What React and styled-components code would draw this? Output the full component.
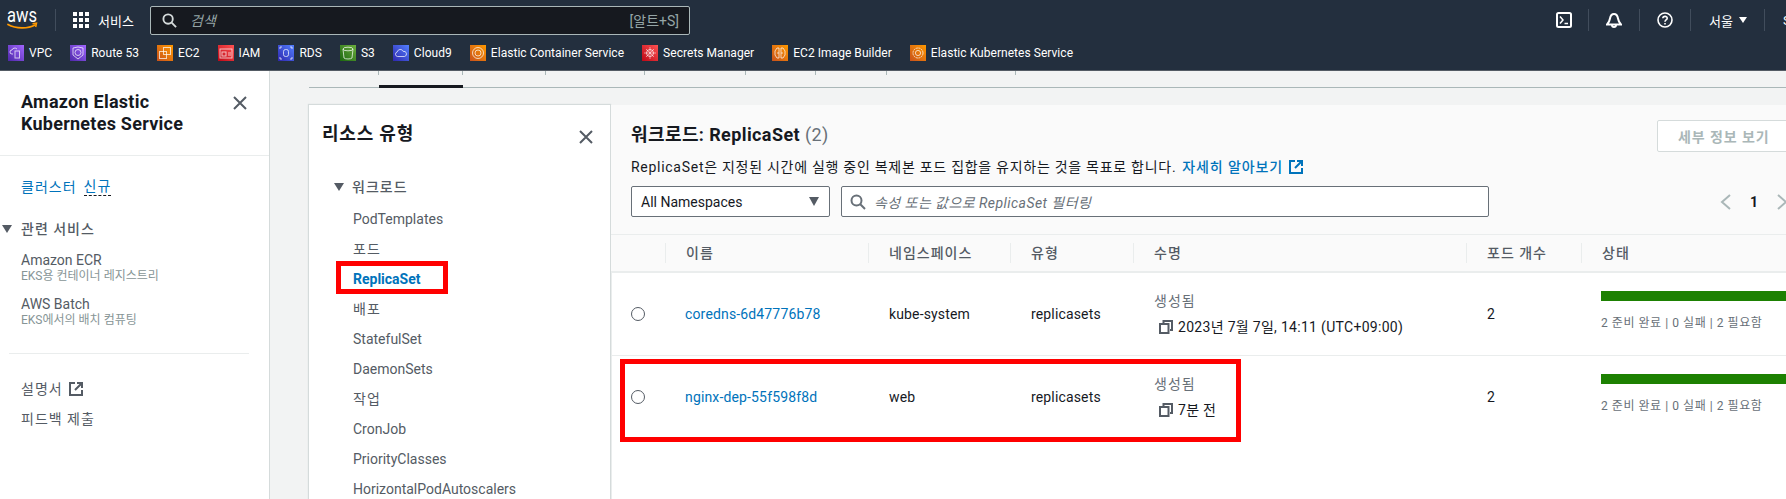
import React from 'react'
import styled, { createGlobalStyle } from 'styled-components'

const GlobalStyle = createGlobalStyle`
  html, body {
    margin: 0;
    padding: 0;
    background: #fff;
  }
  * {
    box-sizing: border-box;
  }
  body {
    font-family: Roboto, "Noto Sans CJK KR", sans-serif;
    font-size: 14px;
    color: #16191f;
  }
`

const Page = styled.div`
  width: 1786px;
  height: 499px;
  overflow: hidden;
  display: flex;
  flex-direction: column;
`

// the reference's hangul sets wider than Noto's, so labels get a little tracking
const Hangul = styled.span`
  letter-spacing: 1px;
`

/* top nav */
const Nav = styled.header`
  height: 71px;
  flex-shrink: 0;
  background: #232f3e;
  border-bottom: 1px solid #545b64;
  color: #fff;
`

const TopRow = styled.div`
  height: 40px;
  display: flex;
  align-items: center;
  white-space: nowrap;
`

const LogoWrap = styled.div`
  width: 55px;
  padding-left: 7px;
  display: flex;
`

const NavDivider = styled.span`
  width: 1px;
  height: 22px;
  background: #414d5c;
  flex-shrink: 0;
`

const ServicesButton = styled.div`
  display: flex;
  align-items: center;
  gap: 9px;
  width: 94px;
  padding-left: 17px;
  font-size: 13px;
`

const SearchBox = styled.div`
  width: 540px;
  height: 29px;
  display: flex;
  align-items: center;
  padding: 0 10px 0 11px;
  background: #16191f;
  border: 1px solid #aab7b8;
  border-radius: 2px;
`

const SearchHint = styled.span`
  margin-left: 13px;
  font-size: 14px;
  font-style: italic;
  color: #95a5a6;
  flex: 1;
`

const Shortcut = styled.span`
  font-size: 14px;
  color: #95a5a6;
`

const NavTools = styled.div`
  margin-left: auto;
  display: flex;
  align-items: center;
  flex-shrink: 0;
`

const ToolIcon = styled.span`
  width: ${(p) => p.$first ? 32 : 50}px;
  display: flex;
  justify-content: ${(p) => p.$first ? 'flex-start' : 'center'};
`

const Region = styled.div`
  width: 73px;
  padding-left: 18px;
  display: flex;
  align-items: center;
  gap: 6px;
  font-size: 13px;
`

const RegionCaret = styled.span`
  width: 0;
  height: 0;
  border-left: 4px solid transparent;
  border-right: 4px solid transparent;
  border-top: 6px solid #fff;
`

const Account = styled.div`
  width: 21px;
  padding-left: 18px;
  font-size: 13px;
  overflow: hidden;
`

const FavRow = styled.div`
  height: 30px;
  display: flex;
  align-items: flex-start;
  gap: 18px;
  padding: 5px 0 0 8px;
  white-space: nowrap;
`

const Fav = styled.div`
  display: flex;
  align-items: center;
  gap: 5px;
  font-size: 12px;
  line-height: 16px;
  letter-spacing: 0.04px;
`

const FavIcon = styled.span`
  width: 16px;
  height: 16px;
  display: flex;
  background: linear-gradient(45deg, ${(p) => p.$from}, ${(p) => p.$to});
`

/* left service sidebar */
const Body = styled.div`
  flex: 1;
  display: flex;
  min-height: 0;
`

const Sidebar = styled.aside`
  width: 270px;
  flex-shrink: 0;
  background: #fff;
  border-right: 1px solid #d5dbdb;
`

const SideHeader = styled.div`
  display: flex;
  justify-content: space-between;
  padding: 20px 22px 20px 21px;
  border-bottom: 1px solid #eaeded;
`

const SideTitle = styled.h2`
  margin: 0;
  font-size: 18px;
  line-height: 22px;
  font-weight: 700;
  letter-spacing: 0.25px;
`

const CloseWrap = styled.span`
  display: flex;
  padding-top: ${(p) => p.$top}px;
`

const SideNav = styled.nav`
  padding: 21px 0 0 21px;
`

const SideLink = styled.div`
  line-height: 20px;
  color: ${(p) => p.$blue ? '#0073bb' : '#545b64'};
  margin-top: ${(p) => p.$mt || 0}px;
  display: flex;
  align-items: center;
`

const NewBadge = styled.span`
  margin-left: 7px;
  border-bottom: 1px dashed #16191f;
  line-height: 17px;
  letter-spacing: 1px;
`

const SideGroup = styled.div`
  position: relative;
  margin-top: 22px;
  line-height: 20px;
  font-weight: 500;
  color: #545b64;
`

const GroupCaret = styled.span`
  position: absolute;
  left: -19px;
  top: 6px;
  width: 0;
  height: 0;
  border-left: 5px solid transparent;
  border-right: 5px solid transparent;
  border-top: 8px solid #545b64;
`

const SideSub = styled.div`
  font-size: 12px;
  line-height: 16px;
  color: #879596;
  margin-top: -2px;
`

const SideSep = styled.hr`
  border: 0;
  border-top: 1px solid #eaeded;
  margin: 25px 20px 25px -12px;
`

const DocLabel = styled(Hangul)`
  margin-right: 6px;
`

/* content area */
const Content = styled.main`
  flex: 1;
  min-width: 0;
  background: #f2f3f3;
  padding-left: 39px;
  display: flex;
  flex-direction: column;
`

const TabStrip = styled.div`
  height: 17px;
  flex-shrink: 0;
  display: flex;
  border-bottom: 1px solid #aab7b8;
`

const Tab = styled.div`
  width: ${(p) => p.$w}px;
  height: 17px;
  display: flex;
  justify-content: flex-end;
  border-bottom: ${(p) => p.$active ? '3px solid #16191f' : '0'};
`

const Tick = styled.span`
  width: 1px;
  height: 4px;
  background: #aab7b8;
`

const Panels = styled.div`
  flex: 1;
  min-height: 0;
  margin-top: 17px;
  display: flex;
  gap: 1px;
`

const ResourcePanel = styled.section`
  position: relative;
  width: 301px;
  flex-shrink: 0;
  background: #fff;
  box-shadow: 0 0 1px 1px #d5dbdb;
  padding: 18px 17px 0 13px;
`

const PanelHead = styled.div`
  display: flex;
  justify-content: space-between;
`

const PanelTitle = styled.h2`
  margin: 0;
  font-size: 18px;
  line-height: 22px;
  font-weight: 700;
  letter-spacing: 0.8px;
`

const Tree = styled.div`
  margin-top: 32px;
  padding-left: 12px;
`

const TreeHead = styled.div`
  display: flex;
  align-items: center;
  gap: 8px;
  line-height: 20px;
  color: #545b64;
  font-weight: 500;
`

const TreeCaret = styled.span`
  width: 0;
  height: 0;
  border-left: 5px solid transparent;
  border-right: 5px solid transparent;
  border-top: 8px solid #545b64;
`

const TreeList = styled.div`
  margin-top: 7px;
  padding-left: 19px;
`

const TreeItem = styled.div`
  line-height: 30px;
  color: ${(p) => p.$active ? '#0073bb' : '#545b64'};
  font-weight: ${(p) => p.$active ? 700 : 400};
  letter-spacing: ${(p) => p.$ko ? 1 : 0}px;
`

const RedBox = styled.div`
  position: absolute;
  left: ${(p) => p.$x}px;
  top: ${(p) => p.$y}px;
  width: ${(p) => p.$w}px;
  height: ${(p) => p.$h}px;
  border: 5px solid #ff0000;
  pointer-events: none;
`

const WorkloadPanel = styled.section`
  position: relative;
  flex: 1;
  min-width: 0;
  background: #fff;
  overflow: hidden;
  box-shadow: inset 1px 0 0 #eaeded;
`

const WorkloadHead = styled.div`
  background: #fafafa;
  padding: 15px 0 17px 20px;
`

const TitleRow = styled.div`
  display: flex;
  justify-content: space-between;
  align-items: flex-start;
`

const WorkloadTitle = styled.h1`
  margin: 4px 0 0;
  font-size: 18px;
  line-height: 22px;
  font-weight: 700;
  letter-spacing: 0.4px;
`

const TitleCount = styled.span`
  font-weight: 400;
  color: #687078;
`

const DetailButton = styled.button`
  width: 150px;
  height: 32px;
  flex-shrink: 0;
  margin-right: -21px;
  padding: 0 0 0 20px;
  text-align: left;
  font: 700 14px Roboto, "Noto Sans CJK KR", sans-serif;
  letter-spacing: 0.9px;
  color: #aab7b8;
  background: #fff;
  border: 1px solid #d5dbdb;
  border-radius: 2px;
`

const Description = styled.div`
  margin: 5px 0 0;
  line-height: 20px;
  display: flex;
  align-items: center;
`

const DescriptionText = styled.span`
  letter-spacing: 0.72px;
`

const LearnLink = styled.span`
  margin-left: 6px;
  color: #0073bb;
  font-weight: 500;
  letter-spacing: 0.9px;
  display: flex;
  align-items: center;
  gap: 6px;
`

const FilterRow = styled.div`
  margin-top: 9px;
  height: 31px;
  display: flex;
  align-items: stretch;
`

const Select = styled.div`
  width: 199px;
  display: flex;
  align-items: center;
  justify-content: space-between;
  padding: 0 10px 0 9px;
  background: #fff;
  border: 1px solid #687078;
  border-radius: 2px;
`

const SelectCaret = styled.span`
  width: 0;
  height: 0;
  border-left: 5.5px solid transparent;
  border-right: 5.5px solid transparent;
  border-top: 9px solid #545b64;
`

const FilterInput = styled.div`
  width: 648px;
  margin-left: 11px;
  display: flex;
  align-items: center;
  gap: 8px;
  padding-left: 8px;
  background: #fff;
  border: 1px solid #687078;
  border-radius: 2px;
  font-style: italic;
  color: #687078;
  letter-spacing: 0.45px;
`

const Pager = styled.div`
  margin-left: auto;
  margin-right: -2px;
  display: flex;
  align-items: center;
  gap: 19px;
  font-weight: 700;
`

const TableGrid = styled.div`
  display: grid;
  grid-template-columns: 54px 203px 142px 123px 333px 115px 1fr;
  border-bottom: ${(p) => p.$line ? `${p.$line}px solid #eaeded` : '0'};
`

const HeadGrid = styled(TableGrid)`
  height: 39px;
  background: #fafafa;
  border-top: 1px solid #eaeded;
  align-items: center;
`

const HeadCell = styled.div`
  height: 20px;
  line-height: 21px;
  padding-left: 20px;
  font-weight: 500;
  letter-spacing: 1px;
  color: #545b64;
  border-left: ${(p) => p.$bare ? '0' : '1px solid #eaeded'};
`

const Cell = styled.div`
  height: 82px;
  padding-left: 21px;
  display: flex;
  flex-direction: column;
  justify-content: center;
  line-height: 20px;
  letter-spacing: 0.15px;
  color: #16191f;
  white-space: nowrap;
`

const LinkCell = styled(Cell)`
  padding-left: 20px;
  color: #0073bb;
`

const RadioCell = styled(Cell)`
  padding-left: 20px;
`

const Radio = styled.span`
  width: 14px;
  height: 14px;
  border: 1px solid #545b64;
  border-radius: 50%;
  background: #fff;
`

const AgeLabel = styled.div`
  color: #687078;
  margin-bottom: 6px;
  letter-spacing: 1px;
`

const AgeValue = styled.div`
  display: flex;
  align-items: center;
  gap: 5px;
  padding-left: 5px;
  letter-spacing: 0.3px;
`

const StatusBar = styled.div`
  height: 10px;
  background: #1d8102;
  margin: 0 0 14px;
`

const StatusCell = styled(Cell)`
  padding-left: 20px;
  justify-content: flex-start;
  padding-top: 18px;
`

const StatusText = styled.div`
  font-size: 12px;
  line-height: 16px;
  color: #687078;
  letter-spacing: 0.55px;
`

/* icons */
const Glyph = ({ children }) => (
  <svg width="16" height="16" viewBox="0 0 16 16" fill="none" stroke="#fff" strokeOpacity="0.7" strokeWidth="1">
    {children}
  </svg>
)

const AwsLogo = () => (
  <svg width="32" height="24" viewBox="0 0 32 24" style={{ overflow: 'visible' }}>
    <text x="0" y="14" fontFamily="Roboto, sans-serif" fontSize="21" fill="#fff" textLength="30" lengthAdjust="spacingAndGlyphs">aws</text>
    <path d="M1 16.500c8 4.500 20 4.500 27 .5" fill="none" stroke="#ff9900" strokeWidth="1.8" strokeLinecap="round" />
    <path d="M25.500 15.800l4-.6-.8 3.800" fill="none" stroke="#ff9900" strokeWidth="1.5" />
  </svg>
)

const GridIcon = () => (
  <svg width="16" height="16" viewBox="0 0 16 16" fill="#fff">
    {[0, 6, 12].map((x) => [0, 6, 12].map((y) => (
      <rect key={`${x}-${y}`} x={x} y={y} width="4" height="4" />
    )))}
  </svg>
)

const SearchIcon = ({ color, size = 16, sw = 2 }) => (
  <svg width={size} height={size} viewBox="0 0 16 16" fill="none" stroke={color} strokeWidth={sw} style={{ flexShrink: 0 }}>
    <circle cx="6.500" cy="6.500" r="5" />
    <path d="M10.300 10.300L15 15" />
  </svg>
)

const CloseIcon = () => (
  <svg width="14" height="14" viewBox="0 0 14 14" stroke="#545b64" strokeWidth="2" fill="none">
    <path d="M1 1l12 12M13 1L1 13" />
  </svg>
)

const ExternalIcon = ({ color }) => (
  <svg width="14" height="14" viewBox="0 0 14 14" fill="none" stroke={color} strokeWidth="2">
    <path d="M6 1H1v12h12V8" />
    <path d="M8 1h5v5M13 1L6 8" />
  </svg>
)

const CopyIcon = () => (
  <svg width="14" height="14" viewBox="0 0 14 14" fill="none" stroke="#545b64" strokeWidth="2" style={{ flexShrink: 0 }}>
    <rect x="1" y="4" width="8.500" height="9" />
    <path d="M4.500 3V1H13v9h-2" />
  </svg>
)

const favorites = [
  { name: 'VPC', from: '#4d27a8', to: '#a166ff', glyph: <><path d="M5 9H4a2 2 0 0 1 0-4c.4-2 3.600-2.600 5-1" /><rect x="7" y="6" width="4.500" height="7" /></> },
  { name: 'Route 53', from: '#4d27a8', to: '#a166ff', glyph: <><path d="M3 3l5-1 5 1v7l-5 4-5-4z" /><circle cx="8" cy="7.500" r="3" /></> },
  { name: 'EC2', from: '#c8511b', to: '#ff9900', glyph: <><rect x="2.500" y="6.500" width="7" height="7" /><rect x="6.500" y="2.500" width="7" height="7" /></> },
  { name: 'IAM', from: '#bd0816', to: '#ff5252', glyph: <><rect x="2" y="4" width="12" height="9" /><rect x="4" y="7" width="4" height="4" /><path d="M10 8h3M10 10h3" /></> },
  { name: 'RDS', from: '#2e27ad', to: '#527fff', glyph: <><rect x="5.500" y="4.500" width="5" height="7" rx="2" /><path d="M2 4V2h2M12 2h2v2M14 12v2h-2M4 14H2v-2" /></> },
  { name: 'S3', from: '#1b660f', to: '#6cae3e', glyph: <><ellipse cx="8" cy="4" rx="5" ry="1.800" /><path d="M3 4l1 9c1 1.300 7 1.300 8 0l1-9" /></> },
  { name: 'Cloud9', from: '#2e27ad', to: '#527fff', glyph: <path d="M4.500 11.500a2.300 2.300 0 0 1-.3-4.500C4.800 4 9 3.600 10.200 6.400a2.600 2.600 0 0 1 1.300 5.100z" /> },
  { name: 'Elastic Container Service', from: '#c8511b', to: '#ff9900', glyph: <><circle cx="8" cy="8" r="5.500" /><circle cx="8" cy="8" r="3" /></> },
  { name: 'Secrets Manager', from: '#bd0816', to: '#ff5252', glyph: <><circle cx="8" cy="8" r="3.500" /><path d="M8 2v12M2 8h12M4 4l8 8M12 4l-8 8" strokeOpacity="0.5" /></> },
  { name: 'EC2 Image Builder', from: '#c8511b', to: '#ff9900', glyph: <><path d="M7 3H5L3 6v4l2 3h2zM9 3h2l2 3v4l-2 3H9z" /><path d="M5 8h2M9 8h2" /></> },
  { name: 'Elastic Kubernetes Service', from: '#c8511b', to: '#ff9900', glyph: <><circle cx="8" cy="8" r="5" strokeDasharray="2 0.6" /><circle cx="8" cy="8" r="2.600" /></> },
]

const tabs = [
  { w: 70 },
  { w: 84, active: true },
  { w: 83 },
  { w: 99 },
  { w: 101 },
  { w: 70 },
  { w: 71 },
  { w: 129 },
]

const treeItems = [
  'PodTemplates', '포드', 'ReplicaSet', '배포', 'StatefulSet', 'DaemonSets',
  '작업', 'CronJob', 'PriorityClasses', 'HorizontalPodAutoscalers',
]

const headers = ['이름', '네임스페이스', '유형', '수명', '포드 개수', '상태']

const rows = [
  { name: 'coredns-6d47776b78', ns: 'kube-system', age: '2023년 7월 7일, 14:11 (UTC+09:00)' },
  { name: 'nginx-dep-55f598f8d', ns: 'web', age: '7분 전' },
]

const App = () => {
  return (
    <Page>
      <GlobalStyle />
      <Nav>
        <TopRow>
          <LogoWrap><AwsLogo /></LogoWrap>
          <NavDivider />
          <ServicesButton><GridIcon />서비스</ServicesButton>
          <SearchBox>
            <SearchIcon color="#d5dbdb" size={15} />
            <SearchHint>검색</SearchHint>
            <Shortcut>[알트+S]</Shortcut>
          </SearchBox>
          <NavTools>
            <ToolIcon $first>
              <svg width="16" height="16" viewBox="0 0 16 16" fill="none" stroke="#fff" strokeWidth="2">
                <rect x="1" y="1" width="14" height="14" rx="1.500" />
                <path d="M4 4.500L7 8l-3 3.500M8.500 11.500h3.500" strokeWidth="1.500" />
              </svg>
            </ToolIcon>
            <NavDivider />
            <ToolIcon>
              <svg width="16" height="16" viewBox="0 0 16 16" fill="none" stroke="#fff" strokeWidth="2">
                <path d="M1 12.500h14c-2-2-2.500-3-3-6C11.500 3.500 10 2 8 2S4.500 3.500 4 6.500c-.5 3-1 4-3 6z" />
                <path d="M6 13a2 2 0 0 0 4 0" />
              </svg>
            </ToolIcon>
            <NavDivider />
            <ToolIcon>
              <svg width="16" height="16" viewBox="0 0 16 16" fill="none" stroke="#fff" strokeWidth="1.600">
                <circle cx="8" cy="8" r="7" />
                <path d="M5.800 6.300C6 3.800 10.200 3.800 10.200 6.200c0 1.800-2.200 1.700-2.200 3.500" />
                <path d="M8 11v1.500" />
              </svg>
            </ToolIcon>
            <NavDivider />
            <Region>서울<RegionCaret /></Region>
            <NavDivider />
            <Account>S</Account>
          </NavTools>
        </TopRow>
        <FavRow>
          {favorites.map((f) => (
            <Fav key={f.name}>
              <FavIcon $from={f.from} $to={f.to}><Glyph>{f.glyph}</Glyph></FavIcon>
              {f.name}
            </Fav>
          ))}
        </FavRow>
      </Nav>
      <Body>
        <Sidebar>
          <SideHeader>
            <SideTitle>Amazon Elastic<br />Kubernetes Service</SideTitle>
            <CloseWrap $top={5}><CloseIcon /></CloseWrap>
          </SideHeader>
          <SideNav>
            <SideLink $blue><Hangul>클러스터</Hangul><NewBadge>신규</NewBadge></SideLink>
            <SideGroup><GroupCaret /><Hangul>관련 서비스</Hangul></SideGroup>
            <SideLink $mt={11}>Amazon ECR</SideLink>
            <SideSub>EKS용 컨테이너 레지스트리</SideSub>
            <SideLink $mt={10}>AWS Batch</SideLink>
            <SideSub>EKS에서의 배치 컴퓨팅</SideSub>
            <SideSep />
            <SideLink><DocLabel>설명서</DocLabel><ExternalIcon color="#545b64" /></SideLink>
            <SideLink $mt={10}><Hangul>피드백 제출</Hangul></SideLink>
          </SideNav>
        </Sidebar>
        <Content>
          <TabStrip>
            {tabs.map((t, i) => (
              <Tab key={i} $w={t.w} $active={t.active}><Tick /></Tab>
            ))}
          </TabStrip>
          <Panels>
            <ResourcePanel>
              <PanelHead>
                <PanelTitle>리소스 유형</PanelTitle>
                <CloseWrap $top={7}><CloseIcon /></CloseWrap>
              </PanelHead>
              <Tree>
                <TreeHead><TreeCaret /><Hangul>워크로드</Hangul></TreeHead>
                <TreeList>
                  {treeItems.map((item) => (
                    <TreeItem key={item} $active={item === 'ReplicaSet'} $ko={/[가-힣]/.test(item)}>{item}</TreeItem>
                  ))}
                </TreeList>
              </Tree>
              <RedBox $x={27} $y={156} $w={112} $h={33} />
            </ResourcePanel>
            <WorkloadPanel>
              <WorkloadHead>
                <TitleRow>
                  <WorkloadTitle>워크로드: ReplicaSet <TitleCount>(2)</TitleCount></WorkloadTitle>
                  <DetailButton>세부 정보 보기</DetailButton>
                </TitleRow>
                <Description>
                  <DescriptionText>ReplicaSet은 지정된 시간에 실행 중인 복제본 포드 집합을 유지하는 것을 목표로 합니다.</DescriptionText>
                  <LearnLink>자세히 알아보기 <ExternalIcon color="#0073bb" /></LearnLink>
                </Description>
                <FilterRow>
                  <Select>All Namespaces<SelectCaret /></Select>
                  <FilterInput>
                    <SearchIcon color="#687078" />
                    속성 또는 값으로 ReplicaSet 필터링
                  </FilterInput>
                  <Pager>
                    <svg width="11" height="16" viewBox="0 0 11 16" fill="none" stroke="#aab7b8" strokeWidth="2"><path d="M10 1L2 8l8 7" /></svg>
                    <span>1</span>
                    <svg width="11" height="16" viewBox="0 0 11 16" fill="none" stroke="#aab7b8" strokeWidth="2"><path d="M1 1l8 7-8 7" /></svg>
                  </Pager>
                </FilterRow>
              </WorkloadHead>
              <HeadGrid $line={2}>
                <HeadCell $bare />
                {headers.map((h) => <HeadCell key={h}>{h}</HeadCell>)}
              </HeadGrid>
              {rows.map((r, i) => (
                <TableGrid key={r.name} $line={i === 0 ? 1 : 0}>
                  <RadioCell><Radio /></RadioCell>
                  <LinkCell>{r.name}</LinkCell>
                  <Cell>{r.ns}</Cell>
                  <Cell>replicasets</Cell>
                  <Cell>
                    <AgeLabel>생성됨</AgeLabel>
                    <AgeValue><CopyIcon />{r.age}</AgeValue>
                  </Cell>
                  <Cell>2</Cell>
                  <StatusCell>
                    <StatusBar />
                    <StatusText>2 준비 완료 | 0 실패 | 2 필요함</StatusText>
                  </StatusCell>
                </TableGrid>
              ))}
              <RedBox $x={9} $y={254} $w={621} $h={83} />
            </WorkloadPanel>
          </Panels>
        </Content>
      </Body>
    </Page>
  )
}

export default App
